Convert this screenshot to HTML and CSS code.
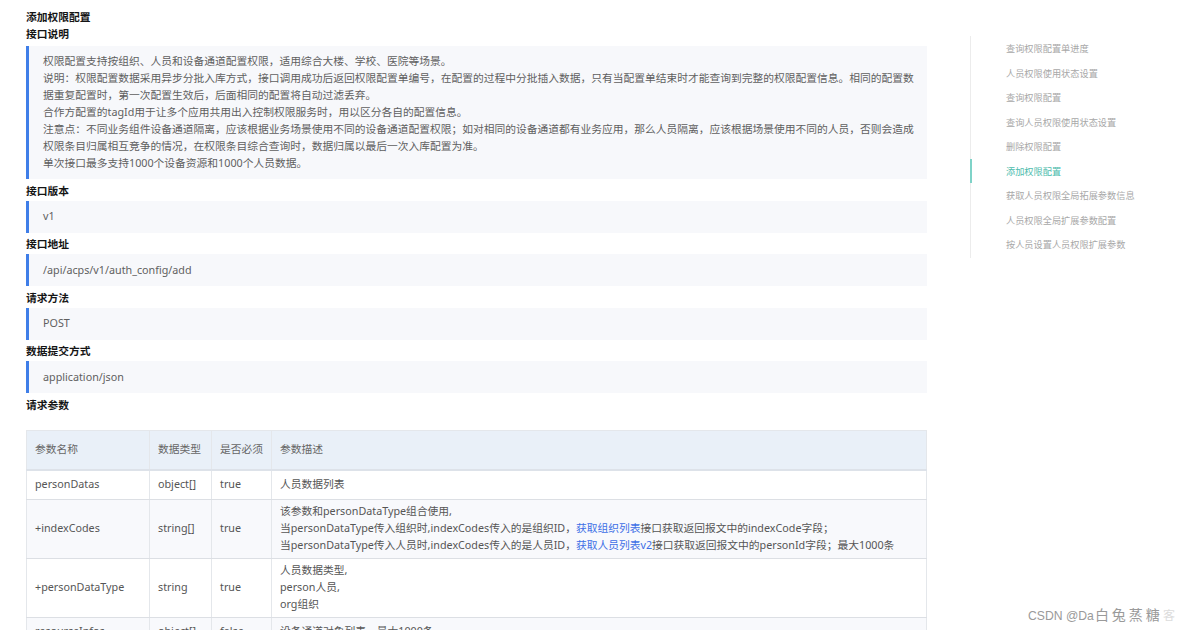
FILE: index.html
```html
<!DOCTYPE html>
<html lang="zh-CN">
<head>
<meta charset="utf-8">
<title>添加权限配置</title>
<link rel="stylesheet" href="styles.css">
</head>
<body>
<div class="page">
  <main class="doc">
    <h1 class="title">添加权限配置</h1>
    <h2 class="sec">接口说明</h2>
    <div class="quote">
      <p>权限配置支持按组织、人员和设备通道配置权限，适用综合大楼、学校、医院等场景。</p>
      <p>说明：权限配置数据采用异步分批入库方式，接口调用成功后返回权限配置单编号，在配置的过程中分批插入数据，只有当配置单结束时才能查询到完整的权限配置信息。相同的配置数据重复配置时，第一次配置生效后，后面相同的配置将自动过滤丢弃。</p>
      <p>合作方配置的tagId用于让多个应用共用出入控制权限服务时，用以区分各自的配置信息。</p>
      <p>注意点：不同业务组件设备通道隔离，应该根据业务场景使用不同的设备通道配置权限；如对相同的设备通道都有业务应用，那么人员隔离，应该根据场景使用不同的人员，否则会造成权限条目归属相互竞争的情况，在权限条目综合查询时，数据归属以最后一次入库配置为准。</p>
      <p>单次接口最多支持1000个设备资源和1000个人员数据。</p>
    </div>
    <h2 class="sec">接口版本</h2>
    <div class="quote short"><p>v1</p></div>
    <h2 class="sec">接口地址</h2>
    <div class="quote short"><p>/api/acps/v1/auth_config/add</p></div>
    <h2 class="sec">请求方法</h2>
    <div class="quote short"><p>POST</p></div>
    <h2 class="sec">数据提交方式</h2>
    <div class="quote short"><p>application/json</p></div>
    <h2 class="sec">请求参数</h2>
    <table class="params">
      <colgroup>
        <col class="c-name"><col class="c-type"><col class="c-req"><col class="c-desc">
      </colgroup>
      <thead>
        <tr><th>参数名称</th><th>数据类型</th><th>是否必须</th><th>参数描述</th></tr>
      </thead>
      <tbody>
        <tr><td>personDatas</td><td>object[]</td><td>true</td><td>人员数据列表</td></tr>
        <tr class="alt"><td>+indexCodes</td><td>string[]</td><td>true</td><td>该参数和personDataType组合使用,<br>当personDataType传入组织时,indexCodes传入的是组织ID，<a class="link">获取组织列表</a>接口获取返回报文中的indexCode字段；<br>当personDataType传入人员时,indexCodes传入的是人员ID，<a class="link">获取人员列表v2</a>接口获取返回报文中的personId字段；最大1000条</td></tr>
        <tr><td>+personDataType</td><td>string</td><td>true</td><td>人员数据类型,<br>person人员,<br>org组织</td></tr>
        <tr class="alt"><td>resourceInfos</td><td>object[]</td><td>false</td><td>设备通道对象列表，最大1000条</td></tr>
      </tbody>
    </table>
  </main>
  <nav class="toc">
    <a class="toc-item">查询权限配置单进度</a>
    <a class="toc-item">人员权限使用状态设置</a>
    <a class="toc-item">查询权限配置</a>
    <a class="toc-item">查询人员权限使用状态设置</a>
    <a class="toc-item">删除权限配置</a>
    <a class="toc-item active">添加权限配置</a>
    <a class="toc-item">获取人员权限全局拓展参数信息</a>
    <a class="toc-item">人员权限全局扩展参数配置</a>
    <a class="toc-item">按人员设置人员权限扩展参数</a>
  </nav>
</div>
<div class="watermark"><span class="wm-latin">CSDN @Da</span><span class="wm-cjk">白兔蒸糖</span><span class="wm-ghost">客</span></div>
</body>
</html>
```
FILE: styles.css
```css
html {
  overflow: hidden;
}
body {
  margin: 0;
  background: #ffffff;
  font-family: "Noto Sans", "Noto Sans CJK SC", sans-serif;
  font-size: 10.75px;
  color: #5f5f5f;
}
.page {
  display: flex;
  align-items: flex-start;
  padding: 8px 0 0 26px;
}
.doc {
  width: 901px;
  flex: none;
}
.title,
.sec {
  margin: 0;
  font-family: "Noto Sans CJK SC", sans-serif;
  font-size: 10.75px;
  font-weight: 700;
  color: #151515;
}
.title {
  line-height: 17px;
}
.sec {
  line-height: 20px;
}
.title + .sec {
  line-height: 17px;
  margin-bottom: 4px;
}
.quote {
  background: #f7f8fb;
  border-left: 3px solid #3f7ee8;
  padding: 7px 12px 7px 14px;
  margin: 0 0 1.5px;
}
.quote p {
  margin: 0;
  line-height: 17px;
}
.quote.short {
  padding-top: 7.5px;
  padding-bottom: 7.5px;
}
.params {
  margin-top: 15px;
  width: 901px;
  border-collapse: collapse;
  table-layout: fixed;
  border: 1px solid #e4e7eb;
}
.c-name { width: 123px; }
.c-type { width: 62px; }
.c-req { width: 60px; }
.params th,
.params td {
  text-align: left;
  font-weight: 400;
  padding: 3.5px 8px;
  line-height: 17px;
  vertical-align: middle;
  border-left: 1px solid #e4e7eb;
}
.params th {
  height: 31px;
  background: #e9f0f8;
  color: #666;
  border-bottom: 2px solid #dde2e9;
}
.params td {
  height: 21px;
  color: #555;
  border-bottom: 1px solid #dcdfe4;
}
.params tr.alt td {
  background: #f8f9fc;
}
.link {
  color: #3d6fe6;
}
.toc {
  margin: 28px 0 0 43px;
  border-left: 1px solid #ececec;
  padding: 0 0 1px 0;
  display: flex;
  flex-direction: column;
  width: 190px;
}
.toc-item {
  display: block;
  height: 24.5px;
  line-height: 24.5px;
  padding-left: 34px;
  font-family: "Noto Sans CJK SC", sans-serif;
  font-size: 9.2px;
  color: #a8a8a8;
  margin-left: -1px;
  border-left: 2px solid transparent;
}
.toc-item.active {
  color: #4dbcad;
  border-left-color: #7fd3c8;
}
.watermark {
  position: absolute;
  left: 1028px;
  top: 605px;
  color: #9a9a9a;
  white-space: nowrap;
  line-height: 18px;
}
.wm-latin {
  font-family: "Liberation Sans", sans-serif;
  font-size: 12.2px;
}
.wm-cjk {
  font-family: "Noto Sans CJK SC", sans-serif;
  font-size: 14px;
  letter-spacing: 3px;
  margin-left: 1px;
}
.wm-ghost {
  font-family: "Noto Sans CJK SC", sans-serif;
  font-size: 12px;
  color: #dcdcdc;
}
```
